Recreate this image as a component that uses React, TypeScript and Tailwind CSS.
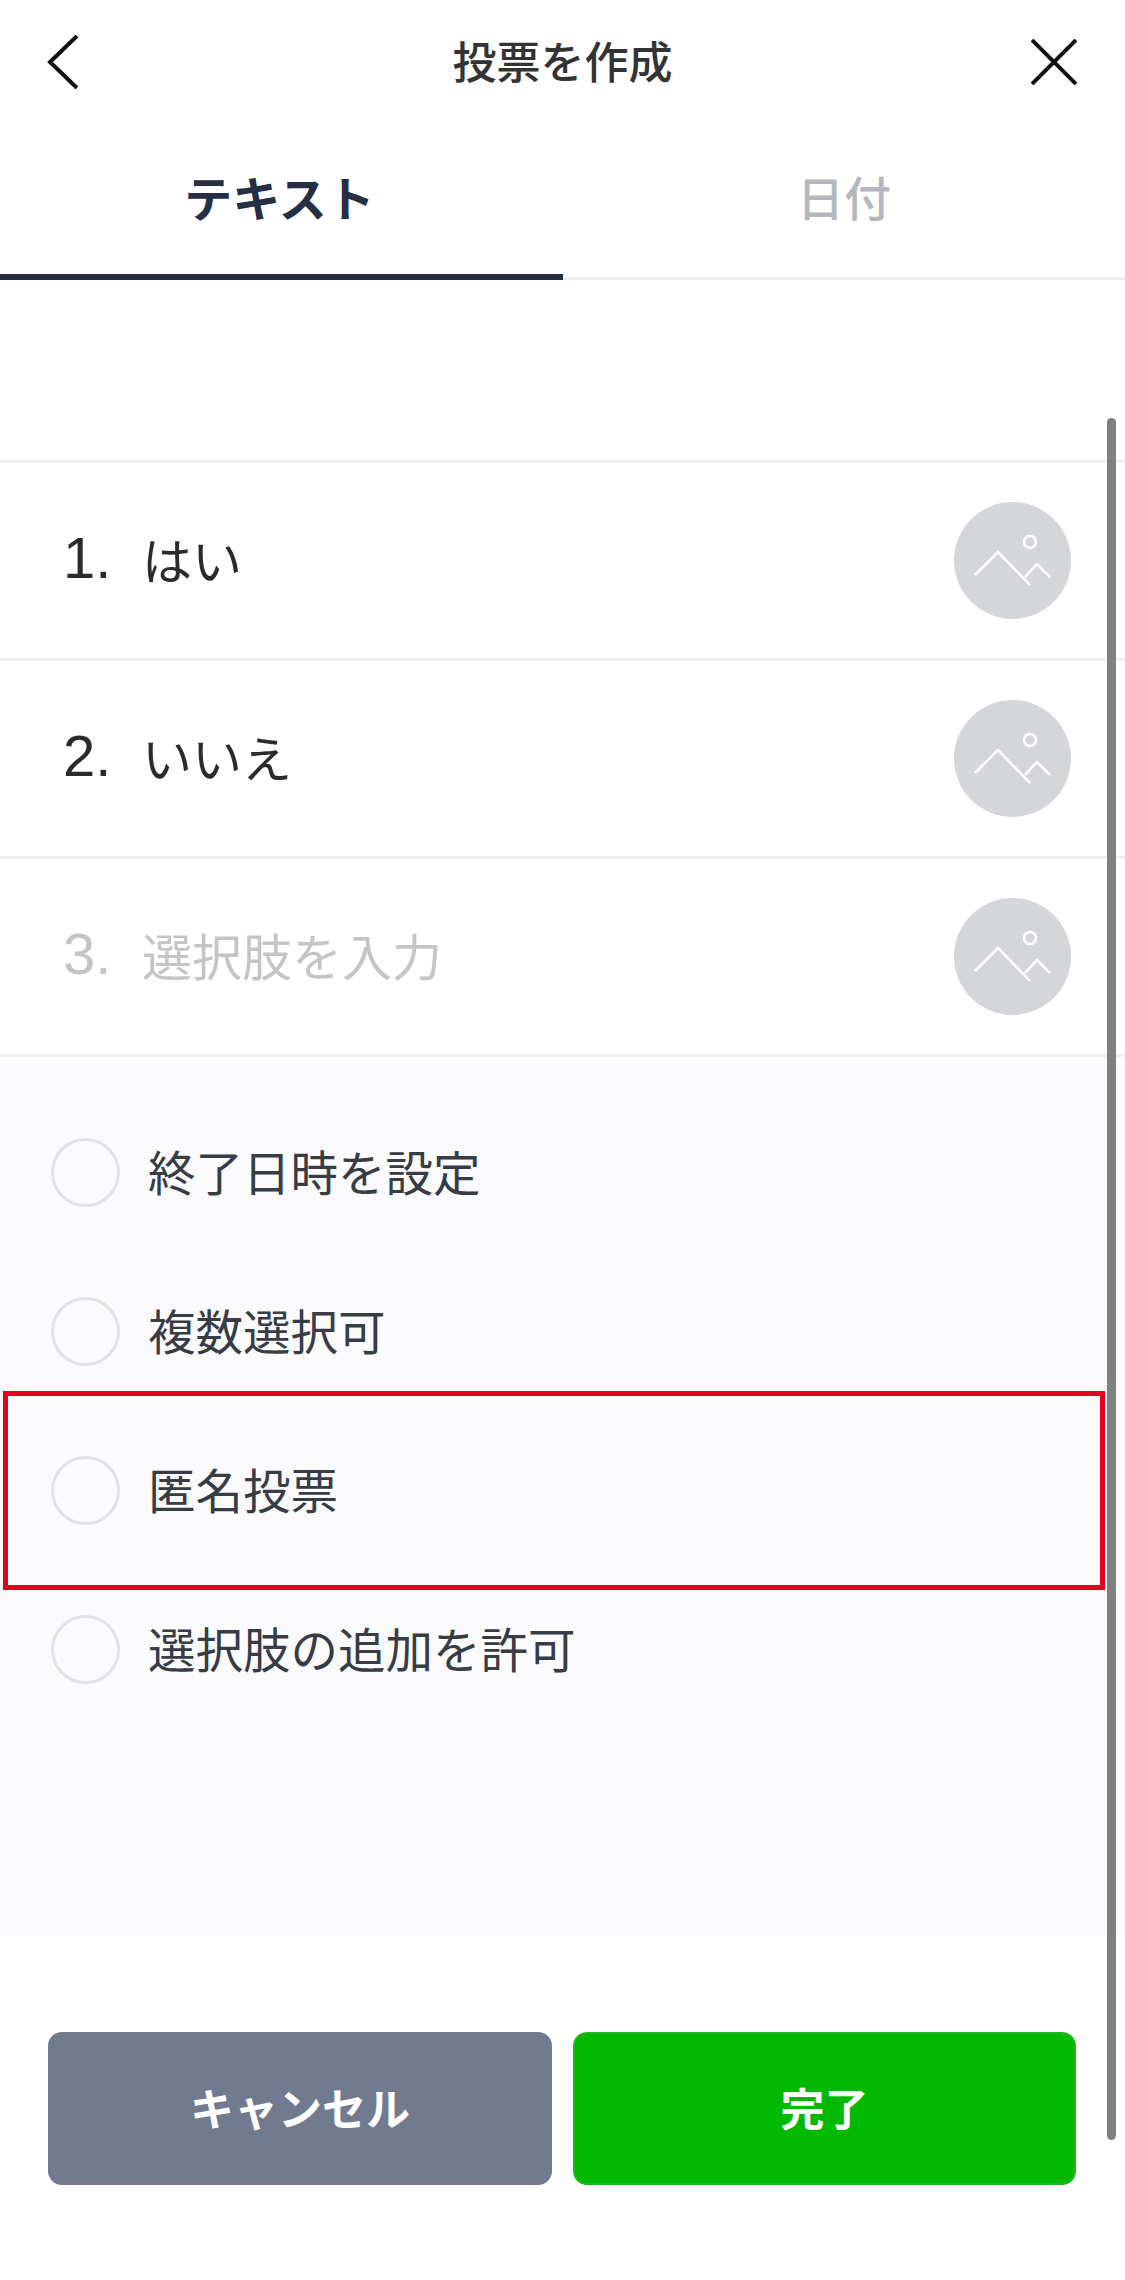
const font = "font-['Noto_Sans_CJK_JP','Noto_Sans_CJK_SC',sans-serif]";

const choices = [
  { num: "1.", label: "はい", filled: true },
  { num: "2.", label: "いいえ", filled: true },
  { num: "3.", label: "選択肢を入力", filled: false },
];

const options = ["終了日時を設定", "複数選択可", "匿名投票", "選択肢の追加を許可"];

function ImageButton() {
  return (
    <div className="w-[117px] h-[117px] rounded-full bg-[#d5d6d9] shrink-0">
      <svg width="117" height="117" viewBox="0 0 117 117" fill="none" stroke="#ffffff" strokeWidth="2.5">
        <path d="M21 73 L44 50 L76 83" />
        <path d="M71 75 L83 62 L96 75" />
        <circle cx="76" cy="40" r="6" />
      </svg>
    </div>
  );
}

export default function App() {
  return (
    <div className={`${font} relative w-[1125px] h-[2280px] overflow-hidden bg-white flex flex-col`}>
      <div className="h-[124px] shrink-0 flex items-center pl-[46px] pr-[48px]">
        <div className="w-[46px]">
          <svg width="34" height="54" viewBox="0 0 34 54" fill="none" stroke="#111111" strokeWidth="4">
            <path d="M31 1 L4 27 L31 53" />
          </svg>
        </div>
        <div className="flex-1 text-center pb-[4px] pl-[2px] text-[44px] font-medium text-[#333333]">投票を作成</div>
        <svg width="46" height="46" viewBox="0 0 46 46" fill="none" stroke="#111111" strokeWidth="4">
          <path d="M1 1 L45 45 M45 1 L1 45" />
        </svg>
      </div>

      <div className="h-[156px] shrink-0 flex">
        <div className="w-[563px] flex items-center justify-center border-b-[6px] border-[#252e42] pb-[6px] pr-[4px] text-[48px] font-bold text-[#252e42]">
          テキスト
        </div>
        <div className="flex-1 flex items-center justify-center border-b-[3px] border-[#f0f0f0] pb-[9px] text-[47px] font-medium text-[#b5b7bc]">
          日付
        </div>
      </div>

      <div className="h-[180px] shrink-0" />

      {choices.map((c) => (
        <div key={c.num} className="h-[198px] shrink-0 flex items-center border-t-[3px] border-[#f0f0f0] pl-[63px] pr-[54px]">
          <div className={`w-[79px] pb-[5px] text-[58px] leading-none font-['Liberation_Sans',sans-serif] ${c.filled ? "text-[#2b2b2b]" : "text-[#c5c5c7]"}`}>
            {c.num}
          </div>
          <div className={`flex-1 pb-[5px] text-[50px] ${c.filled ? "text-[#2b2b2b]" : "text-[#c5c5c7]"}`}>{c.label}</div>
          <ImageButton />
        </div>
      ))}

      <div className="h-[882px] shrink-0 border-t-[3px] border-[#f0f0f0] bg-[#fbfbfd] pt-[36px]">
        {options.map((o) => (
          <div key={o} className="h-[159px] flex items-center pl-[51px] gap-[28px]">
            <div className="w-[69px] h-[69px] rounded-full border-[3px] border-[#e3e3e5]" />
            <div className="pb-[4px] text-[47.5px] text-[#383c45]">{o}</div>
          </div>
        ))}
      </div>

      <div className="flex gap-[21px] pl-[48px] pt-[96px]">
        <div className="w-[504px] h-[153px] rounded-[14px] bg-[#727a90] flex items-center justify-center pb-[4px] text-[44px] font-bold text-white">
          キャンセル
        </div>
        <div className="w-[503px] h-[153px] rounded-[14px] border-2 border-[#1fb81f] bg-[#00b900] flex items-center justify-center pb-[4px] text-[44px] font-bold text-white">
          完了
        </div>
      </div>

      <div className="absolute left-[3px] top-[1391px] w-[1102px] h-[199px] border-[5px] border-[#e60020]" />
      <div className="absolute left-[1107px] top-[418px] w-[9px] h-[1722px] rounded-full bg-[#808080]" />
    </div>
  );
}
